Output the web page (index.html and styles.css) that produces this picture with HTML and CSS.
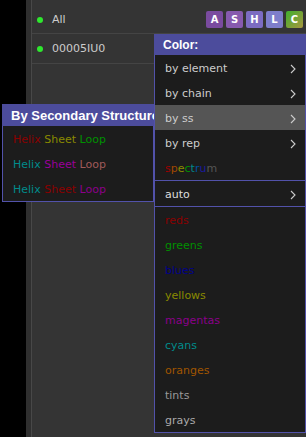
FILE: index.html
```html
<!DOCTYPE html>
<html lang="en">
<head>
  <meta charset="UTF-8">
  <title>Color menu</title>
  <link rel="stylesheet" href="styles.css">
</head>
<body>

  <div class="app">
    <div class="sidebar"></div>
    <div class="gutter"></div>

    <div class="panel">
      <div class="row row-first">
        <span class="dot"></span>
        <span class="name">All</span>
        <div class="badges">
          <span class="badge badge-a">A</span>
          <span class="badge badge-s">S</span>
          <span class="badge badge-h">H</span>
          <span class="badge badge-l">L</span>
          <span class="badge badge-c">C</span>
        </div>
      </div>
      <div class="row">
        <span class="dot"></span>
        <span class="name">00005IU0</span>
      </div>
    </div>

    <!-- color submenu, sits over the object list -->
    <div class="color-menu">
      <div class="menu-title">Color:</div>
      <div class="menu-body">
        <div class="menu-item">by element <svg class="chev" width="6" height="10"><polyline points="1,1 5,5 1,9"/></svg></div>
        <div class="menu-item">by chain <svg class="chev" width="6" height="10"><polyline points="1,1 5,5 1,9"/></svg></div>
        <div class="menu-item active">by ss <svg class="chev" width="6" height="10"><polyline points="1,1 5,5 1,9"/></svg></div>
        <div class="menu-item">by rep <svg class="chev" width="6" height="10"><polyline points="1,1 5,5 1,9"/></svg></div>
        <div class="menu-item spectrum">
          <span><span class="sp-s">s</span><span class="sp-p">p</span><span class="sp-e">e</span><span class="sp-c">c</span><span class="sp-t">t</span><span class="sp-r">r</span><span class="sp-u">u</span><span class="sp-m">m</span></span>
        </div>
        <div class="menu-sep"></div>
        <div class="menu-item auto">auto <svg class="chev" width="6" height="10"><polyline points="1,1 5,5 1,9"/></svg></div>
        <div class="menu-sep"></div>
        <div class="menu-item c-reds">reds</div>
        <div class="menu-item c-greens">greens</div>
        <div class="menu-item c-blues">blues</div>
        <div class="menu-item c-yellows">yellows</div>
        <div class="menu-item c-magentas">magentas</div>
        <div class="menu-item c-cyans">cyans</div>
        <div class="menu-item c-oranges">oranges</div>
        <div class="menu-item c-tints">tints</div>
        <div class="menu-item c-grays">grays</div>
      </div>
    </div>

    <!-- by ss submenu -->
    <div class="ss-popup">
      <div class="ss-title">By Secondary Structure</div>
      <div class="ss-body">
        <div class="ss-item"><span class="red">Helix</span> <span class="olive">Sheet</span> <span class="green">Loop</span></div>
        <div class="ss-item"><span class="teal">Helix</span> <span class="magenta">Sheet</span> <span class="salmon">Loop</span></div>
        <div class="ss-item"><span class="teal">Helix</span> <span class="red">Sheet</span> <span class="purple">Loop</span></div>
      </div>
    </div>
  </div>

</body>
</html>
```

FILE: styles.css
```css
body {
  margin: 0;
  background: #333;
  font-family: "DejaVu Sans", Verdana, sans-serif;
  font-size: 11px;
  color: #ccc;
}

.app {
  display: flex;
  height: 437px;
  position: relative;
  overflow: hidden;
}

.sidebar {
  width: 26px;
  background: #000;
}

.gutter {
  width: 5px;
  background: #2f2f2f;
}

.panel {
  flex: 1;
  background: #343434;
  border-left: 1px solid #484848;
}

.row {
  display: flex;
  align-items: center;
  height: 29px;
  border-bottom: 1px solid #444;
}

.row-first {
  height: 27px;
  padding-top: 6px;
}

.dot {
  width: 6px;
  height: 6px;
  border-radius: 50%;
  background: #2ee82e;
  margin-left: 5px;
  margin-right: 9px;
}

.name {
  color: #ccc;
  flex: 1;
}

.badges {
  display: flex;
  gap: 3px;
  margin-right: 3px;
}

.badge {
  width: 17px;
  height: 17px;
  border-radius: 2px;
  color: #fff;
  font-weight: 700;
  font-size: 10px;
  display: flex;
  align-items: center;
  justify-content: center;
}

.badge-a { background: #7a4b9f; }
.badge-s { background: #875aae; }
.badge-h { background: #7c6cc2; }
.badge-l { background: #7e7ecb; }
.badge-c { background: linear-gradient(135deg, #3fb02e, #a8963e); }

/* color menu */

.color-menu {
  position: absolute;
  left: 154px;
  top: 34px;
  width: 152px;
}

.menu-title {
  height: 21px;
  line-height: 23px;
  padding-left: 9px;
  background: #4c4c9c;
  color: #fff;
  font-family: "Liberation Sans", Arial, sans-serif;
  font-weight: 700;
  font-size: 12px;
}

.menu-body {
  background: #1c1c1c;
  border: 1px solid #5252aa;
  border-top: none;
}

.menu-item {
  height: 23px;
  padding-top: 2px;
  display: flex;
  align-items: center;
  justify-content: space-between;
  padding-left: 10px;
  padding-right: 9px;
  color: #ccc;
}

.menu-item.active {
  background: #555;
}

.menu-item.auto {
  color: #ddd;
}

.menu-sep {
  border-top: 1px solid #5252aa;
}

.chev polyline {
  fill: none;
  stroke: #ccc;
  stroke-width: 1.1;
}

.sp-s { color: #a00000; }
.sp-p { color: #a04800; }
.sp-e { color: #8a8a00; }
.sp-c { color: #009000; }
.sp-t { color: #008888; }
.sp-r { color: #0050a0; }
.sp-u { color: #1a1aa0; }
.sp-m { color: #555; }

.c-reds { color: #8b0000; }
.c-greens { color: #009000; }
.c-blues { color: #00008b; }
.c-yellows { color: #8a8a00; }
.c-magentas { color: #8b008b; }
.c-cyans { color: #008b8b; }
.c-oranges { color: #a05500; }
.c-tints { color: #999; }
.c-grays { color: #aaa; }

/* secondary structure popup */

.ss-popup {
  position: absolute;
  left: 2px;
  top: 104px;
  width: 152px;
  z-index: 2;
}

.ss-title {
  height: 22px;
  line-height: 23px;
  padding-left: 9px;
  background: #4c4c9c;
  color: #fff;
  font-family: "Liberation Sans", Arial, sans-serif;
  font-weight: 700;
  font-size: 13px;
  white-space: nowrap;
  overflow: hidden;
}

.ss-body {
  background: #1c1c1c;
  border: 1px solid #5252aa;
  border-top: none;
}

.ss-item {
  height: 23px;
  padding-top: 2px;
  line-height: 23px;
  padding-left: 10px;
  white-space: nowrap;
}

.red { color: #8b0000; }
.olive { color: #8a8a00; }
.green { color: #009000; }
.teal { color: #008b8b; }
.magenta { color: #9a009a; }
.salmon { color: #a05a5a; }
.purple { color: #8b008b; }
```
